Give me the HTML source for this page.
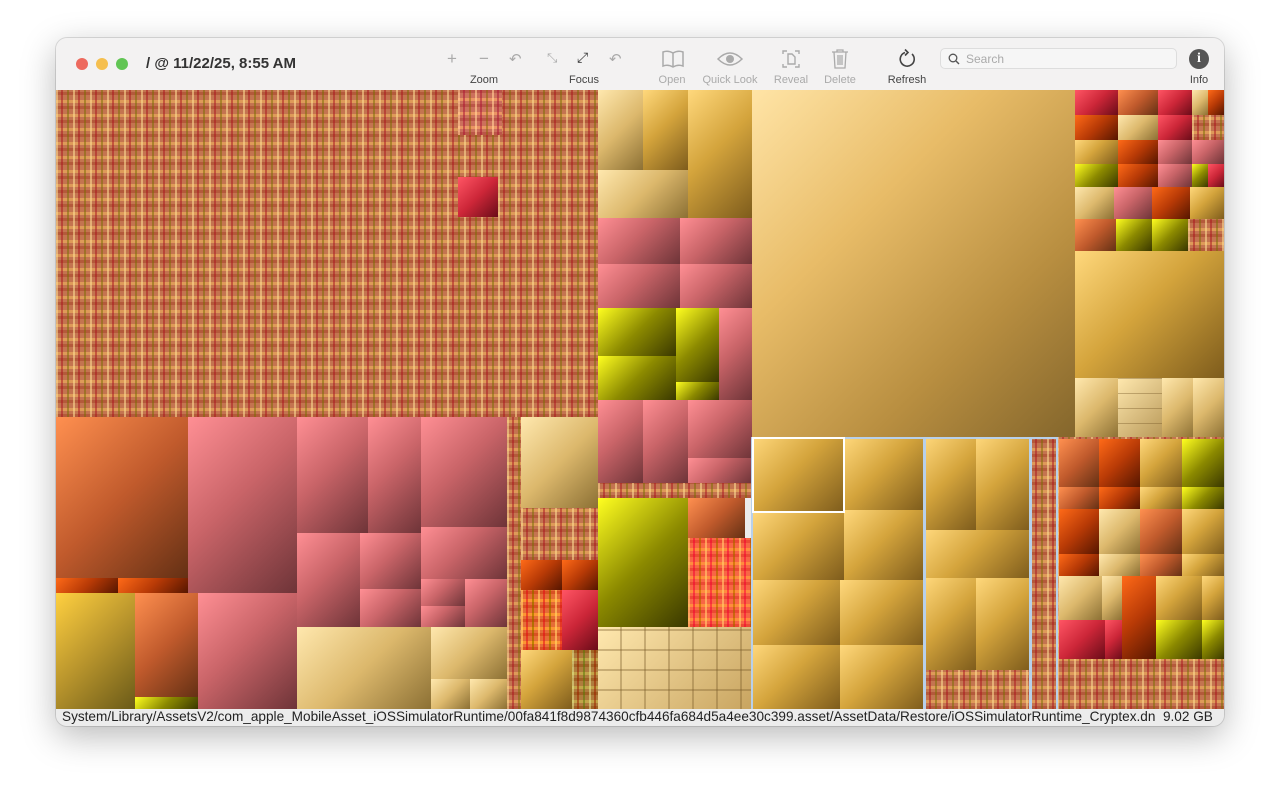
<!DOCTYPE html>
<html><head><meta charset="utf-8"><style>
*{margin:0;padding:0;box-sizing:border-box}
body{width:1280px;height:800px;background:#fff;position:relative;overflow:hidden;font-family:"Liberation Sans",sans-serif}
.win{position:absolute;left:56px;top:38px;width:1168px;height:688px;border-radius:11px;overflow:hidden;box-shadow:0 10px 35px rgba(0,0,0,.28),0 0 0 1px rgba(0,0,0,.12);background:#ececec}
.tb{position:absolute;left:0;top:0;width:1168px;height:52px;background:#f3f2f2}
.b{position:absolute}
.g{background:linear-gradient(135deg,#ffd87c 0%,#d4a43c 45%,#7e5c1c 100%)}
.t{background:linear-gradient(135deg,#ffe8ae 0%,#dcb86c 50%,#8c7034 100%)}
.p{background:linear-gradient(135deg,#ff8f94 0%,#c96468 45%,#6e3438 100%)}
.r{background:linear-gradient(135deg,#ff5564 0%,#cc2638 50%,#6a0c18 100%)}
.o{background:linear-gradient(135deg,#ff6a18 0%,#b83a06 50%,#561600 100%)}
.s{background:linear-gradient(135deg,#ff9050 0%,#c05a2c 50%,#643014 100%)}
.y{background:linear-gradient(135deg,#ffff20 0%,#8c8a00 50%,#3a3800 100%)}
.yg{background:linear-gradient(135deg,#ffd040 0%,#b8942c 50%,#6a5a18 100%)}
.n{background:repeating-linear-gradient(90deg,rgba(255,224,150,.55) 0 2px,transparent 2px 5px,rgba(170,20,30,.5) 5px 7px,transparent 7px 11px,rgba(120,110,0,.5) 11px 13px,transparent 13px 17px),repeating-linear-gradient(0deg,rgba(150,40,20,.35) 0 3px,transparent 3px 6px,rgba(255,200,100,.45) 6px 9px,transparent 9px 14px),#c47450}
.big{background:linear-gradient(135deg,#ffe4a6 0%,#e8bc68 35%,#b88e40 70%,#84662c 100%)}
.lbl{position:absolute;font-size:11px;color:#444;text-align:center}
.dim{color:#aaa}
svg{position:absolute}
</style></head><body>
<div class="win">
<div class="tb">
  <div class="b" style="left:20px;top:20px;width:12px;height:12px;border-radius:6px;background:#ed6a5e"></div>
  <div class="b" style="left:40px;top:20px;width:12px;height:12px;border-radius:6px;background:#f5bf4f"></div>
  <div class="b" style="left:60px;top:20px;width:12px;height:12px;border-radius:6px;background:#61c554"></div>
  <div class="b" style="left:90px;top:17px;font-size:15px;font-weight:bold;color:#333">/ @ 11/22/25, 8:55 AM</div>
  <div class="b" style="left:391px;top:11px;font-size:17px;color:#aaa">+</div>
  <div class="b" style="left:423px;top:11px;font-size:17px;color:#aaa">−</div>
  <div class="b" style="left:453px;top:12px;font-size:15px;color:#aaa">↶</div>
  <div class="b" style="left:491px;top:12px;font-size:13px;color:#aaa">⤡</div>
  <div class="b" style="left:521px;top:11px;font-size:14px;color:#333">⤢</div>
  <div class="b" style="left:553px;top:12px;font-size:15px;color:#aaa">↶</div>
  <div class="lbl" style="left:408px;top:36px;width:40px">Zoom</div>
  <div class="lbl" style="left:508px;top:36px;width:40px">Focus</div>
  <svg style="left:605px;top:11px" width="24" height="20" viewBox="0 0 24 20"><path d="M2 3 Q7 1 12 4 Q17 1 22 3 V17 Q17 15 12 18 Q7 15 2 17Z M12 4V18" fill="none" stroke="#aaa" stroke-width="1.5"/></svg>
  <div class="lbl dim" style="left:596px;top:36px;width:40px">Open</div>
  <svg style="left:660px;top:12px" width="28" height="18" viewBox="0 0 28 18"><path d="M2 9 Q14 -3 26 9 Q14 21 2 9Z" fill="none" stroke="#aaa" stroke-width="1.5"/><circle cx="14" cy="9" r="4" fill="#aaa"/></svg>
  <div class="lbl dim" style="left:640px;top:36px;width:68px">Quick Look</div>
  <svg style="left:724px;top:11px" width="22" height="20" viewBox="0 0 22 20"><path d="M3 5V2H7M15 2H19V5M19 15V18H15M7 18H3V15M8 5H12L15 8V15H8Z" fill="none" stroke="#aaa" stroke-width="1.4"/></svg>
  <div class="lbl dim" style="left:715px;top:36px;width:40px">Reveal</div>
  <svg style="left:774px;top:10px" width="20" height="22" viewBox="0 0 20 22"><path d="M2 4H18M7 4V2H13V4M4 4L5 20H15L16 4M8 7V17M10 7V17M12 7V17" fill="none" stroke="#aaa" stroke-width="1.3"/></svg>
  <div class="lbl dim" style="left:764px;top:36px;width:40px">Delete</div>
  <svg style="left:840px;top:10px" width="22" height="22" viewBox="0 0 22 22"><path d="M16 6A7 7 0 1 1 9 4.5M9 1.5L12 4.5L9 7.5" fill="none" stroke="#444" stroke-width="1.6"/></svg>
  <div class="lbl" style="left:826px;top:36px;width:50px">Refresh</div>
  <div class="b" style="left:884px;top:10px;width:237px;height:21px;border:1px solid #ddd;border-radius:5px;background:#f6f6f6"></div>
  <svg style="left:892px;top:15px" width="12" height="12" viewBox="0 0 12 12"><circle cx="5" cy="5" r="3.8" fill="none" stroke="#555" stroke-width="1.3"/><path d="M8 8L11 11" stroke="#555" stroke-width="1.4"/></svg>
  <div class="b" style="left:910px;top:14px;font-size:12px;color:#aaa">Search</div>
  <div class="b" style="left:1133px;top:11px;width:20px;height:20px;border-radius:10px;background:#555;color:#fff;font-size:14px;font-weight:bold;text-align:center;line-height:20px;font-family:'Liberation Serif',serif">i</div>
  <div class="lbl" style="left:1123px;top:36px;width:40px">Info</div>
</div>
<div class="b" style="left:0;top:671px;width:1168px;height:17px;background:#ececec;font-size:13.6px;line-height:16px;color:#222;padding:0 0 0 6px;white-space:nowrap">System/Library/AssetsV2/com_apple_MobileAsset_iOSSimulatorRuntime/00fa841f8d9874360cfb446fa684d5a4ee30c399.asset/AssetData/Restore/iOSSimulatorRuntime_Cryptex.dn&nbsp; 9.02 GB</div>
</div>

<div style="position:absolute;left:0;top:0;width:1280px;height:800px;clip-path:inset(90px 56px 91px 56px)">
<div class="b n" style="left:56px;top:90px;width:542px;height:327px"></div>
<div class="b n" style="left:458px;top:90px;width:44px;height:45px;filter:hue-rotate(-10deg)"></div>
<div class="b r" style="left:458px;top:177px;width:40px;height:40px"></div>
<div class="b t" style="left:598px;top:90px;width:45px;height:80px"></div>
<div class="b g" style="left:643px;top:90px;width:45px;height:80px"></div>
<div class="b t" style="left:598px;top:170px;width:90px;height:48px"></div>
<div class="b g" style="left:688px;top:90px;width:64px;height:128px"></div>
<div class="b p" style="left:598px;top:218px;width:82px;height:46px"></div>
<div class="b p" style="left:680px;top:218px;width:72px;height:46px"></div>
<div class="b p" style="left:598px;top:264px;width:82px;height:44px"></div>
<div class="b p" style="left:680px;top:264px;width:72px;height:44px"></div>
<div class="b y" style="left:598px;top:308px;width:78px;height:48px"></div>
<div class="b y" style="left:598px;top:356px;width:78px;height:44px"></div>
<div class="b y" style="left:676px;top:308px;width:43px;height:74px"></div>
<div class="b y" style="left:676px;top:382px;width:43px;height:18px"></div>
<div class="b p" style="left:719px;top:308px;width:33px;height:92px"></div>
<div class="b p" style="left:598px;top:400px;width:45px;height:83px"></div>
<div class="b p" style="left:643px;top:400px;width:45px;height:83px"></div>
<div class="b p" style="left:688px;top:400px;width:64px;height:58px"></div>
<div class="b p" style="left:688px;top:458px;width:64px;height:25px"></div>
<div class="b n" style="left:598px;top:483px;width:154px;height:15px"></div>
<div class="b y" style="left:598px;top:498px;width:90px;height:129px"></div>
<div class="b s" style="left:688px;top:498px;width:57px;height:40px"></div>
<div class="b n" style="left:688px;top:538px;width:64px;height:89px;filter:saturate(1.6) hue-rotate(-10deg)"></div>
<div class="b t" style="left:598px;top:627px;width:154px;height:82px;background:repeating-linear-gradient(90deg,transparent 0 22px,rgba(120,90,40,.35) 22px 24px),repeating-linear-gradient(0deg,transparent 0 18px,rgba(120,90,40,.35) 18px 20px),linear-gradient(135deg,#ffe8ae,#c8a460)"></div>
<div class="b big" style="left:752px;top:90px;width:323px;height:347px"></div>
<div class="b r" style="left:1075px;top:90px;width:43px;height:25px"></div>
<div class="b s" style="left:1118px;top:90px;width:40px;height:25px"></div>
<div class="b r" style="left:1158px;top:90px;width:34px;height:25px"></div>
<div class="b t" style="left:1192px;top:90px;width:16px;height:25px"></div>
<div class="b o" style="left:1208px;top:90px;width:16px;height:25px"></div>
<div class="b o" style="left:1075px;top:115px;width:43px;height:25px"></div>
<div class="b t" style="left:1118px;top:115px;width:40px;height:25px"></div>
<div class="b r" style="left:1158px;top:115px;width:34px;height:25px"></div>
<div class="b n" style="left:1192px;top:115px;width:32px;height:25px"></div>
<div class="b g" style="left:1075px;top:140px;width:43px;height:24px"></div>
<div class="b o" style="left:1118px;top:140px;width:40px;height:24px"></div>
<div class="b p" style="left:1158px;top:140px;width:34px;height:24px"></div>
<div class="b p" style="left:1192px;top:140px;width:32px;height:24px"></div>
<div class="b y" style="left:1075px;top:164px;width:43px;height:23px"></div>
<div class="b o" style="left:1118px;top:164px;width:40px;height:23px"></div>
<div class="b p" style="left:1158px;top:164px;width:34px;height:23px"></div>
<div class="b y" style="left:1192px;top:164px;width:16px;height:23px"></div>
<div class="b r" style="left:1208px;top:164px;width:16px;height:23px"></div>
<div class="b t" style="left:1075px;top:187px;width:39px;height:32px"></div>
<div class="b p" style="left:1114px;top:187px;width:38px;height:32px"></div>
<div class="b o" style="left:1152px;top:187px;width:38px;height:32px"></div>
<div class="b g" style="left:1190px;top:187px;width:34px;height:32px"></div>
<div class="b s" style="left:1075px;top:219px;width:41px;height:32px"></div>
<div class="b y" style="left:1116px;top:219px;width:36px;height:32px"></div>
<div class="b y" style="left:1152px;top:219px;width:36px;height:32px"></div>
<div class="b n" style="left:1188px;top:219px;width:36px;height:32px"></div>
<div class="b g" style="left:1075px;top:251px;width:149px;height:127px"></div>
<div class="b t" style="left:1075px;top:378px;width:43px;height:60px"></div>
<div class="b t" style="left:1118px;top:378px;width:44px;height:60px;background:repeating-linear-gradient(0deg,transparent 0 14px,rgba(120,90,40,.4) 14px 15px),linear-gradient(135deg,#ffe8ae,#b89858)"></div>
<div class="b t" style="left:1162px;top:378px;width:31px;height:60px"></div>
<div class="b t" style="left:1193px;top:378px;width:31px;height:60px"></div>
<div class="b n" style="left:1057px;top:437px;width:167px;height:272px"></div>
<div class="b s" style="left:1059px;top:439px;width:40px;height:48px"></div>
<div class="b o" style="left:1099px;top:439px;width:41px;height:48px"></div>
<div class="b g" style="left:1140px;top:439px;width:42px;height:48px"></div>
<div class="b y" style="left:1182px;top:439px;width:42px;height:48px"></div>
<div class="b s" style="left:1059px;top:487px;width:40px;height:22px"></div>
<div class="b o" style="left:1099px;top:487px;width:41px;height:22px"></div>
<div class="b g" style="left:1140px;top:487px;width:42px;height:22px"></div>
<div class="b y" style="left:1182px;top:487px;width:42px;height:22px"></div>
<div class="b o" style="left:1059px;top:509px;width:40px;height:45px"></div>
<div class="b t" style="left:1099px;top:509px;width:41px;height:45px"></div>
<div class="b s" style="left:1140px;top:509px;width:42px;height:45px"></div>
<div class="b g" style="left:1182px;top:509px;width:42px;height:45px"></div>
<div class="b o" style="left:1059px;top:554px;width:40px;height:22px"></div>
<div class="b t" style="left:1099px;top:554px;width:41px;height:22px"></div>
<div class="b s" style="left:1140px;top:554px;width:42px;height:22px"></div>
<div class="b g" style="left:1182px;top:554px;width:42px;height:22px"></div>
<div class="b t" style="left:1059px;top:576px;width:43px;height:44px"></div>
<div class="b t" style="left:1102px;top:576px;width:20px;height:44px"></div>
<div class="b o" style="left:1122px;top:576px;width:34px;height:83px"></div>
<div class="b g" style="left:1156px;top:576px;width:46px;height:44px"></div>
<div class="b g" style="left:1202px;top:576px;width:22px;height:44px"></div>
<div class="b r" style="left:1059px;top:620px;width:46px;height:39px"></div>
<div class="b r" style="left:1105px;top:620px;width:17px;height:39px"></div>
<div class="b y" style="left:1156px;top:620px;width:46px;height:39px"></div>
<div class="b y" style="left:1202px;top:620px;width:22px;height:39px"></div>
<div class="b g" style="left:752px;top:437px;width:92px;height:75px"></div>
<div class="b g" style="left:844px;top:437px;width:80px;height:73px"></div>
<div class="b g" style="left:752px;top:512px;width:92px;height:68px"></div>
<div class="b g" style="left:844px;top:510px;width:80px;height:70px"></div>
<div class="b g" style="left:752px;top:580px;width:88px;height:65px"></div>
<div class="b g" style="left:840px;top:580px;width:84px;height:65px"></div>
<div class="b g" style="left:752px;top:645px;width:88px;height:64px"></div>
<div class="b g" style="left:840px;top:645px;width:84px;height:64px"></div>
<div class="b g" style="left:924px;top:437px;width:52px;height:93px"></div>
<div class="b g" style="left:976px;top:437px;width:54px;height:93px"></div>
<div class="b g" style="left:924px;top:530px;width:106px;height:48px"></div>
<div class="b g" style="left:924px;top:578px;width:52px;height:92px"></div>
<div class="b g" style="left:976px;top:578px;width:54px;height:92px"></div>
<div class="b n" style="left:924px;top:670px;width:106px;height:39px"></div>
<div class="b n" style="left:1030px;top:437px;width:27px;height:272px"></div>
<div class="b" style="left:751px;top:437px;width:174px;height:274px;border:2px solid #b8d0ea"></div>
<div class="b" style="left:924px;top:437px;width:107px;height:274px;border:2px solid #b8d0ea"></div>
<div class="b" style="left:1030px;top:437px;width:28px;height:274px;border:2px solid #b8d0ea"></div>
<div class="b" style="left:752px;top:437px;width:93px;height:76px;border:2px solid #fff"></div>
<div class="b s" style="left:56px;top:417px;width:132px;height:161px"></div>
<div class="b o" style="left:56px;top:578px;width:62px;height:15px"></div>
<div class="b o" style="left:118px;top:578px;width:70px;height:15px"></div>
<div class="b p" style="left:188px;top:417px;width:109px;height:176px"></div>
<div class="b yg" style="left:56px;top:593px;width:79px;height:116px"></div>
<div class="b s" style="left:135px;top:593px;width:63px;height:104px"></div>
<div class="b y" style="left:135px;top:697px;width:63px;height:12px"></div>
<div class="b p" style="left:198px;top:593px;width:99px;height:116px"></div>
<div class="b p" style="left:297px;top:417px;width:71px;height:116px"></div>
<div class="b p" style="left:368px;top:417px;width:53px;height:116px"></div>
<div class="b p" style="left:421px;top:417px;width:86px;height:110px"></div>
<div class="b p" style="left:297px;top:533px;width:63px;height:94px"></div>
<div class="b p" style="left:360px;top:533px;width:61px;height:56px"></div>
<div class="b p" style="left:360px;top:589px;width:61px;height:38px"></div>
<div class="b p" style="left:421px;top:527px;width:86px;height:52px"></div>
<div class="b p" style="left:421px;top:579px;width:44px;height:27px"></div>
<div class="b p" style="left:421px;top:606px;width:44px;height:21px"></div>
<div class="b p" style="left:465px;top:579px;width:42px;height:48px"></div>
<div class="b t" style="left:297px;top:627px;width:134px;height:82px"></div>
<div class="b t" style="left:431px;top:627px;width:76px;height:52px"></div>
<div class="b t" style="left:431px;top:679px;width:39px;height:30px"></div>
<div class="b t" style="left:470px;top:679px;width:37px;height:30px"></div>
<div class="b n" style="left:507px;top:417px;width:14px;height:292px"></div>
<div class="b t" style="left:521px;top:417px;width:77px;height:91px"></div>
<div class="b n" style="left:521px;top:508px;width:77px;height:52px"></div>
<div class="b o" style="left:521px;top:560px;width:41px;height:30px"></div>
<div class="b n" style="left:521px;top:590px;width:41px;height:60px;filter:saturate(1.5)"></div>
<div class="b r" style="left:562px;top:590px;width:36px;height:60px"></div>
<div class="b o" style="left:562px;top:560px;width:36px;height:30px"></div>
<div class="b g" style="left:521px;top:650px;width:51px;height:59px"></div>
<div class="b n" style="left:572px;top:650px;width:26px;height:59px;filter:hue-rotate(20deg)"></div>
</div>
</body></html>
